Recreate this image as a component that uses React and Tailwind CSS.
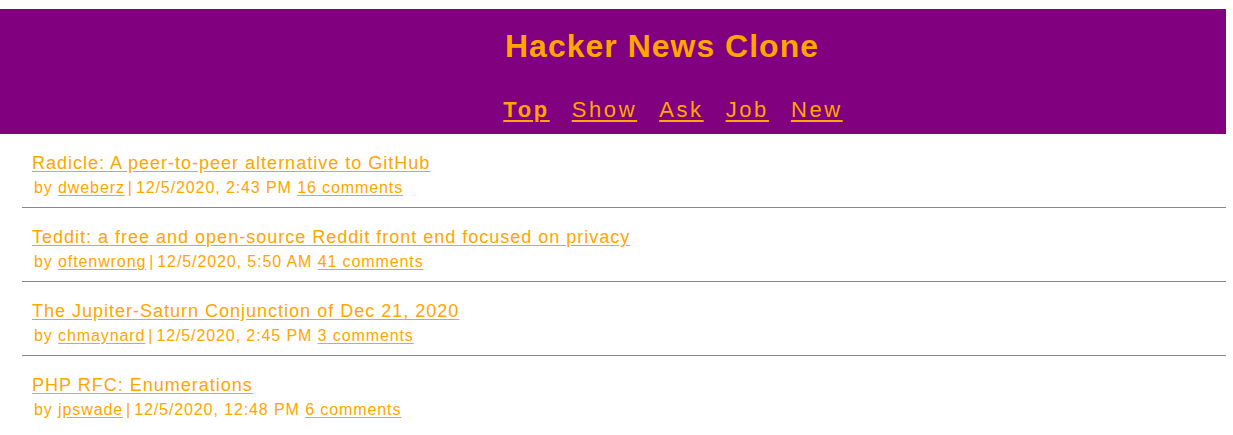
import React from "react";

// dummy stories
const stories = [
  {
    id: 1,
    title: "Radicle: A peer-to-peer alternative to GitHub",
    by: "dweberz",
    time: "12/5/2020, 2:43 PM",
    comments: 16,
  },
  {
    id: 2,
    title: "Teddit: a free and open-source Reddit front end focused on privacy",
    by: "oftenwrong",
    time: "12/5/2020, 5:50 AM",
    comments: 41,
  },
  {
    id: 3,
    title: "The Jupiter-Saturn Conjunction of Dec 21, 2020",
    by: "chmaynard",
    time: "12/5/2020, 2:45 PM",
    comments: 3,
  },
  {
    id: 4,
    title: "PHP RFC: Enumerations",
    by: "jpswade",
    time: "12/5/2020, 12:48 PM",
    comments: 6,
  },
];

const tabs = ["Top", "Show", "Ask", "Job", "New"];

const App = () => {
  return (
    <div className="min-h-[435px] bg-white font-['Liberation_Sans',Arial,sans-serif] text-[#ffa500]">
      {/* header */}
      <div className="mt-[9px] w-[1226px] bg-[#800080] pl-[98px] pt-[19px] pb-[11px]">
        <h1 className="text-center text-[32px] leading-[37px] font-bold tracking-[1px]">Hacker News Clone</h1>
        <div className="mt-[32px] flex justify-center">
          {tabs.map((tab, index) => (
            <a
              key={tab}
              href="#"
              className={`ml-[22px] text-[22px] leading-[26px] tracking-[2.6px] underline underline-offset-[3px] ${index === 0 ? "font-bold" : ""}`}
            >
              {tab}
            </a>
          ))}
        </div>
      </div>

      {/* stories */}
      <div className="ml-[22px] w-[1204px]">
        {stories.map((story, index) => (
          <div
            key={story.id}
            className={`pl-[10px] pt-[19px] pb-[9px] ${index < stories.length - 1 ? "border-b border-[#888888]" : ""}`}
          >
            <a href="#" className="block text-[18px] leading-[21px] tracking-[1px] underline underline-offset-[2px]">
              {story.title}
            </a>
            <div className="mt-[3px] pl-[2px] text-[16px] leading-[21px] tracking-[0.9px]">
              by{" "}
              <a href="#" className="underline underline-offset-[2px]">
                {story.by}
              </a>
              <span className="mx-[3px]">|</span>
              {story.time}{" "}
              <a href="#" className="underline underline-offset-[2px]">
                {story.comments} comments
              </a>
            </div>
          </div>
        ))}
      </div>
    </div>
  );
};

export default App;
